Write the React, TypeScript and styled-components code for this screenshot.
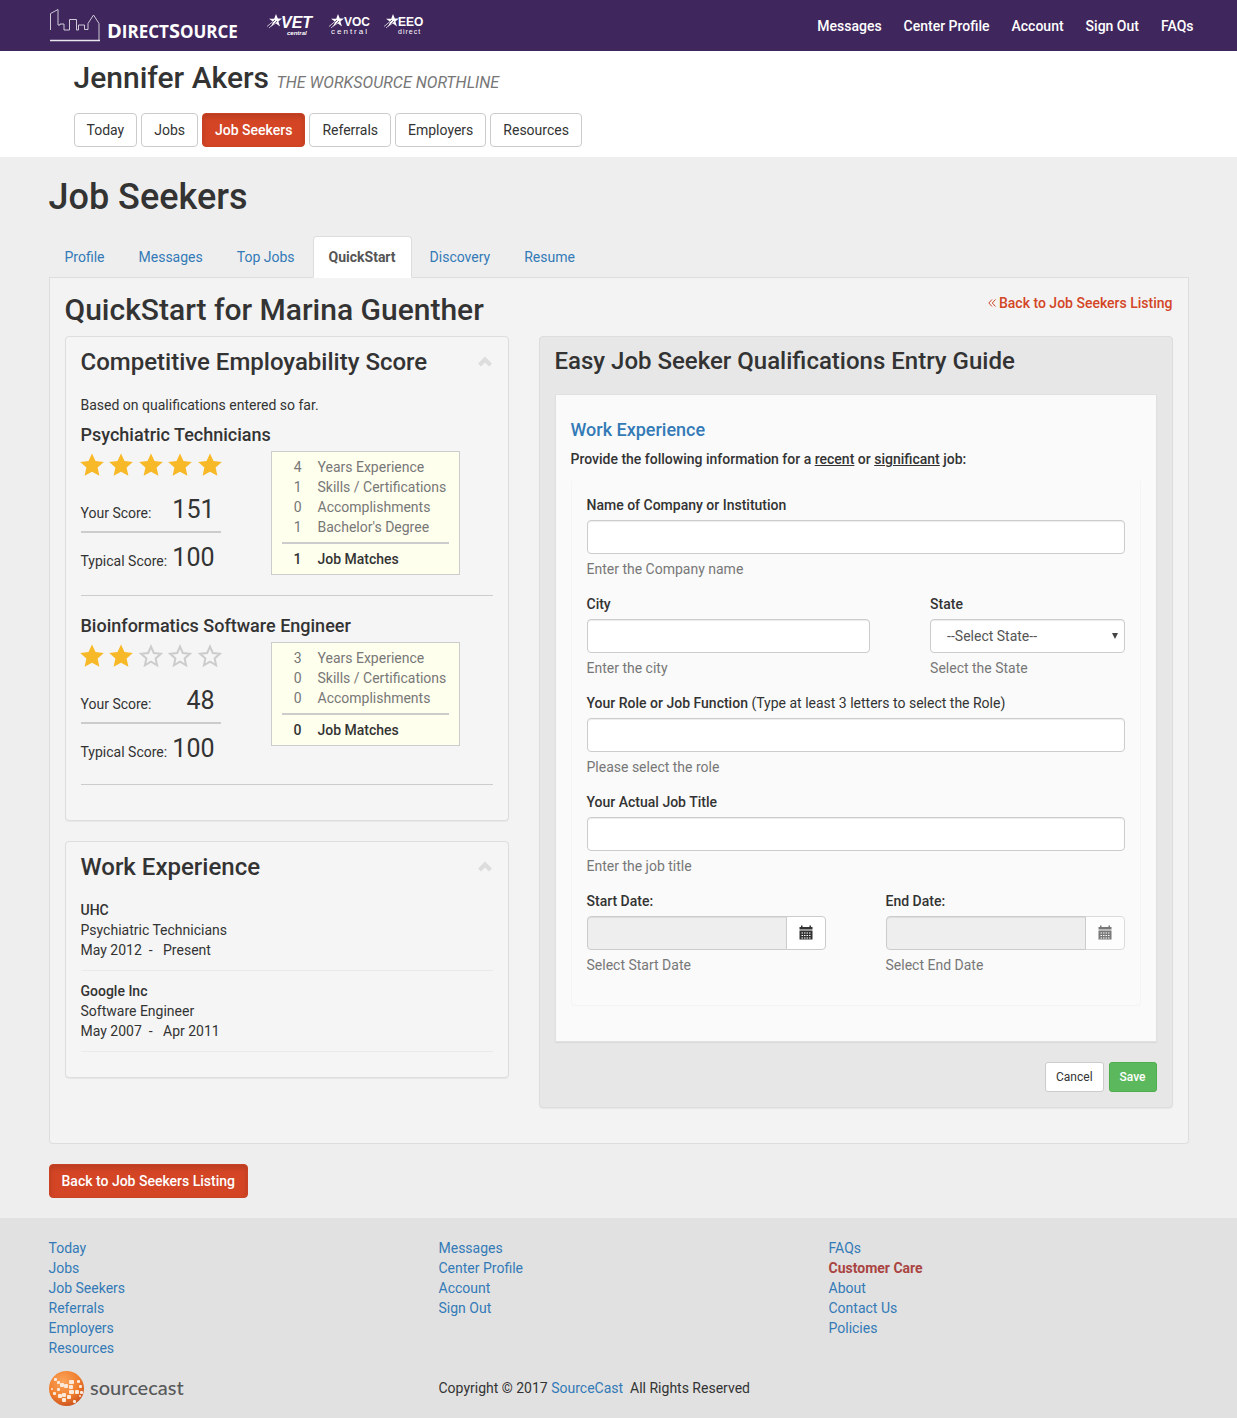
import React, { useId } from "react";
import styled, { createGlobalStyle, css } from "styled-components";

const GlobalStyle = createGlobalStyle`
  *, *::before, *::after { box-sizing: border-box; }
  body {
    margin: 0;
    background: #eee;
    color: #333;
    font: 400 14px/20px Roboto, "Liberation Sans", sans-serif;
  }
  button, input, select { font: inherit; color: inherit; margin: 0; }
  h1, h2, h3, h4, p, ul { margin: 0; padding: 0; }
  h1, h2, h3, h4 { font-weight: 500; }
  ul { list-style: none; }
  a { color: #337ab7; text-decoration: none; }
  svg { display: block; }
`;

/* ---------- shared ---------- */

const Container = styled.div`
  width: 100%;
  max-width: 1170px;
  margin: 0 auto;
  padding: 0 15px;
`;

const primary = css`
  background: #d34525;
  border-color: #c84223;
  color: #fff;
  font-weight: 500;
  box-shadow: inset 0 3px 5px rgba(0, 0, 0, 0.125);
`;

const ButtonLink = styled.a<{ $active?: boolean }>`
  display: inline-block;
  padding: 6px 12px;
  border: 1px solid #ccc;
  border-radius: 4px;
  background: #fff;
  color: #333;
  white-space: nowrap;
  ${(p) => p.$active && primary}
`;

/* ---------- top bar ---------- */

const TopBar = styled.header`
  background: #3f265d;
`;

const TopInner = styled(Container)`
  display: flex;
  align-items: center;
  justify-content: space-between;
  height: 51px;
`;

const Brands = styled.div`
  display: flex;
  align-items: center;
  gap: 28px;
`;

const TopNav = styled.nav`
  display: flex;
  gap: 22px;
  margin-right: -5px;

  a {
    color: #fff;
    font-weight: 500;
  }
`;

/* ---------- user header ---------- */

const UserHeader = styled.section`
  background: #fff;
`;

const UserInner = styled(Container)`
  padding: 10px 40px;
`;

const UserName = styled.h2`
  font-size: 30px;
  line-height: 33px;
  margin-bottom: 19px;
`;

const Center = styled.small`
  color: #777;
  font-size: 16px;
  font-style: italic;
  font-weight: 400;
  line-height: 1;
  text-transform: uppercase;
`;

const MainNav = styled.nav`
  display: flex;
  flex-wrap: wrap;
  gap: 4px;
`;

/* ---------- page ---------- */

const PageTitle = styled.h1`
  padding: 20px 0 19px;
  font-size: 36px;
  line-height: 40px;
`;

const Tabs = styled.ul`
  display: flex;
  gap: 2px;
  border-bottom: 1px solid #ddd;
`;

const Tab = styled.li<{ $active?: boolean }>`
  margin-bottom: -1px;

  a {
    display: block;
    padding: 10px 15px;
    border: 1px solid transparent;
    border-radius: 4px 4px 0 0;
    ${(p) =>
      p.$active &&
      css`
        background: #fff;
        border-color: #ddd #ddd #fff;
        color: #555;
        font-weight: 700;
      `}
  }
`;

const TabPanel = styled.div`
  padding: 15px 15px 35px;
  border: 1px solid #ddd;
  border-top: 0;
  border-radius: 0 0 4px 4px;
  background: #f3f3f3;
`;

const PanelHead = styled.div`
  display: flex;
  justify-content: space-between;
  align-items: flex-start;
  margin-bottom: 10px;

  h2 {
    font-size: 30px;
    line-height: 33px;
  }
`;

const BackLink = styled.a`
  display: flex;
  align-items: center;
  gap: 3px;
  color: #d34525;
  font-weight: 500;
`;

const Columns = styled.div`
  display: grid;
  grid-template-columns: minmax(0, 444fr) minmax(0, 634fr);
  gap: 30px;
  align-items: start;
`;

const LeftColumn = styled.div`
  display: grid;
  gap: 20px;
`;

const Card = styled.section`
  padding: 12px 15px 15px;
  border: 1px solid #ddd;
  border-radius: 4px;
  background: #f5f5f5;
  box-shadow: 0 1px 1px rgba(0, 0, 0, 0.05);
`;

const CardHead = styled.div`
  display: flex;
  justify-content: space-between;
  align-items: center;
  margin-bottom: 20px;
`;

const CardTitle = styled.h3`
  font-size: 24px;
  line-height: 26px;
`;

const CollapseButton = styled.button`
  padding: 0;
  border: 0;
  background: none;
  color: #ddd;
  cursor: pointer;
`;

/* ---------- score ---------- */

const ScoreBlock = styled.article`
  padding-bottom: 20px;
  margin-bottom: 20px;
  border-bottom: 1px solid #ccc;
`;

const Occupation = styled.h4`
  margin: 10px 0 6px;
  font-size: 18px;
  line-height: 20px;
`;

const ScoreBody = styled.div`
  display: flex;
  align-items: flex-start;
  gap: 50px;
`;

const ScoreSide = styled.div`
  width: 140px;
`;

const Stars = styled.div`
  display: flex;
  justify-content: space-between;
  margin: 0 -1px;
  padding: 2px 0 18px;

  svg {
    flex: none;
  }
`;

const ScoreLine = styled.div`
  display: flex;
  align-items: baseline;
  justify-content: space-between;
  padding-right: 6px;
  white-space: nowrap;

  & + & {
    margin-top: 6px;
    padding-top: 10px;
    border: solid #ccc;
    border-width: 2px 0 0;
  }
`;

const ScoreValue = styled.strong`
  font-weight: 400;
  font-size: 25px;
  line-height: 30px;
`;

const Facts = styled.ul`
  width: 189px;
  padding: 5px 10px;
  border: 1px solid #ccc;
  background: #ffffee;
  color: #777;
`;

const Fact = styled.li<{ $total?: boolean }>`
  display: grid;
  grid-template-columns: 20px auto;
  justify-content: start;
  gap: 16px;
  white-space: nowrap;

  span:first-child {
    text-align: right;
  }

  ${(p) =>
    p.$total &&
    css`
      justify-content: stretch;
      margin-top: 5px;
      padding-top: 5px;
      border-top: 2px solid #ccc;
      color: #333;
      font-weight: 500;
    `}
`;

const Job = styled.div`
  padding-bottom: 10px;
  margin-bottom: 10px;
  border-bottom: 1px solid #eaeaea;
  white-space: pre;

  strong {
    font-weight: 500;
  }
`;

/* ---------- form ---------- */

const GuideCard = styled(Card)`
  padding-top: 11px;
  background: #e7e7e7;
`;

const Sheet = styled.div`
  padding: 25px 15px 35px;
  border: 1px solid #e1e1e1;
  background: #fafafa;
  background-clip: padding-box;
  box-shadow: 0 1px 1px rgba(0, 0, 0, 0.05);

  h4 {
    color: #337ab7;
    font-size: 18px;
  }

  p {
    margin: 9px 0 10px;
    font-weight: 500;
  }
`;

const Fields = styled.div`
  display: grid;
  gap: 15px;
  padding: 15px 15px 30px;
  border: 1px solid #f4f4f4;
  border-top-color: transparent;
  border-radius: 4px;
`;

const FieldRow = styled.div<{ $columns: string }>`
  display: grid;
  grid-template-columns: ${(p) => p.$columns};
  gap: 60px;
`;

const FieldBox = styled.div`
  display: grid;
  gap: 5px;

  label {
    font-weight: 500;
  }

  label span {
    font-weight: 400;
  }

  small {
    color: #777;
    font-size: 14px;
  }
`;

const control = css`
  width: 100%;
  min-width: 0;
  height: 34px;
  padding: 6px 12px;
  border: 1px solid #ccc;
  border-radius: 4px;
  background: #fff;
  color: #555;
  box-shadow: inset 0 1px 1px rgba(0, 0, 0, 0.075);
`;

const Input = styled.input`
  ${control}

  &:read-only {
    background: #eee;
    border-radius: 4px 0 0 4px;
  }
`;

const SelectWrap = styled.div`
  position: relative;

  svg {
    position: absolute;
    right: 7px;
    top: 14px;
    pointer-events: none;
  }
`;

const Select = styled.select`
  ${control}
  padding: 6px 16px;
  appearance: none;
`;

const DateGroup = styled.div`
  display: flex;
`;

const DateButton = styled.button`
  flex: none;
  display: grid;
  place-items: center;
  width: 40px;
  margin-left: -1px;
  padding: 0;
  border: 1px solid #ccc;
  border-radius: 0 4px 4px 0;
  background: #fff;
  color: #333;

  &:disabled {
    opacity: 0.65;
  }
`;

const Actions = styled.div`
  display: flex;
  justify-content: flex-end;
  gap: 5px;
  margin-top: 20px;
`;

const SmallButton = styled.button<{ $save?: boolean }>`
  height: 30px;
  padding: 5px 10px;
  border: 1px solid ${(p) => (p.$save ? "#4cae4c" : "#ccc")};
  border-radius: 3px;
  background: ${(p) => (p.$save ? "#5cb85c" : "#fff")};
  color: ${(p) => (p.$save ? "#fff" : "#333")};
  font-size: 12px;
  line-height: 18px;
  font-weight: ${(p) => (p.$save ? 500 : 400)};
`;

const BackRow = styled.div`
  padding: 20px 0;
`;

/* ---------- footer ---------- */

const Footer = styled.footer`
  padding: 20px 0 12px;
  background: #e1e1e1;
`;

const FooterGrid = styled(Container)`
  display: grid;
  grid-template-columns: repeat(3, minmax(0, 1fr));
  column-gap: 30px;
  row-gap: 12px;
`;

const FooterLink = styled.a<{ $strong?: boolean }>`
  ${(p) =>
    p.$strong &&
    css`
      color: #a94442;
      font-weight: 700;
    `}
`;

const Copyright = styled.div`
  grid-column: span 2;
  padding-top: 8px;
  white-space: pre-wrap;
`;

/* ---------- drawings ---------- */

const STAR =
  "M12 0.6 L15.5 8.1 L23.8 9 L17.6 14.6 L19.4 22.8 L12 18.7 L4.6 22.8 L6.4 14.6 L0.2 9 L8.5 8.1 Z";

const Star = ({ on }: { on: boolean }) => (
  <svg width="24" height="24" viewBox="0 0 24 24" aria-hidden="true">
    {on ? (
      <path d={STAR} fill="#f8b928" />
    ) : (
      <path
        d="M12 2.6 L14.8 9 L21.9 9.7 L16.6 14.4 L18.1 21.3 L12 17.7 L5.9 21.3 L7.4 14.4 L2.1 9.7 L9.2 9 Z"
        fill="none"
        stroke="#ccc"
        strokeWidth="2"
      />
    )}
  </svg>
);

const ChevronUp = () => (
  <svg width="16" height="12" viewBox="0 0 16 12" aria-hidden="true">
    <path d="M8 0.600 L15 7.600 L12 10.600 L8 6.600 L4 10.600 L1 7.600 Z" fill="currentColor" />
  </svg>
);

const CalendarIcon = () => (
  <svg width="14" height="16" viewBox="0 0 14 16" fill="currentColor" aria-hidden="true">
    <path d="M0.500 2H2V0.500h1.500V2h7V0.500H12V2h1.500v2.500h-13z" />
    <path d="M0.500 5.500h13v9h-13z" />
    <path
      d="M2.500 8h9M2.500 10.500h9M2.500 13h9"
      stroke="#fff"
      strokeWidth="1.200"
      strokeDasharray="1.500 1"
    />
  </svg>
);

const DirectSourceLogo = () => (
  <svg width="190" height="40" viewBox="0 0 190 40" role="img" aria-label="DirectSource">
    <path
      d="M1.500 24V7.500L9 3.500V19H11V18H15V24H20.500V13.500H27.500V24H29.500V19H35.500V23.500H39V17.500L44.500 9L50 17.500V34"
      fill="none"
      stroke="#cfc9d8"
      strokeWidth="1"
    />
    <path d="M1 34.500H51" stroke="#e8e5ec" strokeWidth="1.500" />
    <text x="58" y="32" fill="#fff" fontFamily='"Open Sans", sans-serif' fontWeight="700" fontSize="20">
      D<tspan fontSize="17">IRECT</tspan>S<tspan fontSize="17">OURCE</tspan>
    </text>
  </svg>
);

const ShootingStar = () => (
  <g>
    <path d="M9 0l1.800 4.500H15l-3.600 3 1.600 5-4-3-5 3.200 2.200-5L2 4.700h5.200z" fill="#fff" />
    <path d="M0 13.500L8 6M3 15L10 7" stroke="#3f265d" strokeWidth="0.800" />
    <path d="M0 12.500L6 7.500M2 14L7 9.500" stroke="#fff" strokeWidth="0.700" />
  </g>
);

const PartnerLogos = () => (
  <svg width="160" height="24" viewBox="0 0 160 24" fill="#fff" fontFamily='"Liberation Sans", sans-serif'>
    <g>
      <ShootingStar />
      <text x="14" y="14" fontSize="16" fontWeight="700" fontStyle="italic">VET</text>
      <text x="20" y="21" fontSize="6" fontStyle="italic" fontWeight="700">central</text>
    </g>
    <g transform="translate(62 0)">
      <ShootingStar />
      <text x="15" y="12" fontSize="12" fontWeight="700">VOC</text>
      <text x="2" y="20" fontSize="8" letterSpacing="2">central</text>
    </g>
    <g transform="translate(117 0)">
      <ShootingStar />
      <text x="14" y="12" fontSize="12" fontWeight="700">EEO</text>
      <text x="14" y="20" fontSize="7" letterSpacing="1">direct</text>
    </g>
  </svg>
);

const GLOBE_TILES = [
  [5, 8, 3], [8, 11, 3], [11, 13, 4], [15, 14, 4], [20, 10, 5], [20, 15, 4], [28, 10, 3], [30, 15, 3],
  [2, 18, 2], [4, 22, 3], [8, 18, 3], [9, 24, 4], [13, 23, 4], [13, 28, 4], [20, 20, 5], [18, 25, 4],
  [26, 20, 4], [31, 21, 3], [30, 25, 2], [24, 30, 3],
];

const SourceCastLogo = () => (
  <svg width="140" height="36" viewBox="0 0 140 36" role="img" aria-label="sourcecast">
    <defs>
      <radialGradient id="globe" cx="0.4" cy="0.3" r="0.75">
        <stop offset="0" stopColor="#fba45a" />
        <stop offset="0.6" stopColor="#f07f2e" />
        <stop offset="1" stopColor="#c9501f" />
      </radialGradient>
    </defs>
    <circle cx="17.500" cy="18.500" r="17.500" fill="url(#globe)" />
    {GLOBE_TILES.map(([x, y, s]) => (
      <rect key={`${x}-${y}`} x={x} y={y} width={s} height={Math.min(s, 4)} rx="1" fill="#fde9da" />
    ))}
    <text x="41" y="25" fill="#58595b" fontFamily="Lato, sans-serif" fontWeight="500" fontSize="20">
      sourcecast
    </text>
  </svg>
);

/* ---------- parts ---------- */

type FieldProps = {
  label: string;
  note?: string;
  help: string;
  children: (id: string) => React.ReactNode;
};

const Field = ({ label, note, help, children }: FieldProps) => {
  const id = useId();
  return (
    <FieldBox>
      <label htmlFor={id}>
        {label}
        {note && <span> {note}</span>}
      </label>
      {children(id)}
      <small>{help}</small>
    </FieldBox>
  );
};

type Score = {
  title: string;
  stars: number;
  score: number;
  facts: [number, string][];
  matches: number;
};

const SCORES: Score[] = [
  {
    title: "Psychiatric Technicians",
    stars: 5,
    score: 151,
    facts: [
      [4, "Years Experience"],
      [1, "Skills / Certifications"],
      [0, "Accomplishments"],
      [1, "Bachelor's Degree"],
    ],
    matches: 1,
  },
  {
    title: "Bioinformatics Software Engineer",
    stars: 2,
    score: 48,
    facts: [
      [3, "Years Experience"],
      [0, "Skills / Certifications"],
      [0, "Accomplishments"],
    ],
    matches: 0,
  },
];

const ScoreItem = ({ item }: { item: Score }) => (
  <ScoreBlock>
    <Occupation>{item.title}</Occupation>
    <ScoreBody>
      <ScoreSide>
        <Stars role="img" aria-label={`${item.stars} of 5 stars`}>
          {[0, 1, 2, 3, 4].map((n) => (
            <Star key={n} on={n < item.stars} />
          ))}
        </Stars>
        <ScoreLine>
          Your Score: <ScoreValue>{item.score}</ScoreValue>
        </ScoreLine>
        <ScoreLine>
          Typical Score: <ScoreValue>100</ScoreValue>
        </ScoreLine>
      </ScoreSide>
      <Facts>
        {item.facts.map(([count, name]) => (
          <Fact key={name}>
            <span>{count}</span>
            <span>{name}</span>
          </Fact>
        ))}
        <Fact $total>
          <span>{item.matches}</span>
          <span>Job Matches</span>
        </Fact>
      </Facts>
    </ScoreBody>
  </ScoreBlock>
);

const CollapsibleHead = ({ title }: { title: string }) => (
  <CardHead>
    <CardTitle>{title}</CardTitle>
    <CollapseButton type="button" aria-label={`Collapse ${title}`}>
      <ChevronUp />
    </CollapseButton>
  </CardHead>
);

const MAIN_NAV = ["Today", "Jobs", "Job Seekers", "Referrals", "Employers", "Resources"];
const TOP_NAV = ["Messages", "Center Profile", "Account", "Sign Out", "FAQs"];
const TABS = ["Profile", "Messages", "Top Jobs", "QuickStart", "Discovery", "Resume"];
const FOOTER = [
  MAIN_NAV,
  ["Messages", "Center Profile", "Account", "Sign Out"],
  ["FAQs", "Customer Care", "About", "Contact Us", "Policies"],
];
const JOBS = [
  ["UHC", "Psychiatric Technicians", "May 2012  -   Present"],
  ["Google Inc", "Software Engineer", "May 2007  -   Apr 2011"],
];

export default function App() {
  return (
    <>
      <GlobalStyle />
      <TopBar>
        <TopInner>
          <Brands>
            <DirectSourceLogo />
            <PartnerLogos />
          </Brands>
          <TopNav>
            {TOP_NAV.map((t) => (
              <a key={t} href="#">{t}</a>
            ))}
          </TopNav>
        </TopInner>
      </TopBar>

      <UserHeader>
        <UserInner>
          <UserName>
            Jennifer Akers <Center>The WorkSource Northline</Center>
          </UserName>
          <MainNav>
            {MAIN_NAV.map((t) => (
              <ButtonLink key={t} href="#" $active={t === "Job Seekers"}>{t}</ButtonLink>
            ))}
          </MainNav>
        </UserInner>
      </UserHeader>

      <Container as="main">
        <PageTitle>Job Seekers</PageTitle>
        <Tabs>
          {TABS.map((t) => (
            <Tab key={t} $active={t === "QuickStart"}>
              <a href="#">{t}</a>
            </Tab>
          ))}
        </Tabs>
        <TabPanel>
          <PanelHead>
            <h2>QuickStart for Marina Guenther</h2>
            <BackLink href="#">
              <svg width="8" height="8" viewBox="0 0 8 8" fill="none" stroke="currentColor" aria-hidden="true">
                <path d="M4 0.500L0.800 4L4 7.500M7.500 0.500L4.300 4L7.500 7.500" />
              </svg>
              Back to Job Seekers Listing
            </BackLink>
          </PanelHead>
          <Columns>
            <LeftColumn>
              <Card>
                <CollapsibleHead title="Competitive Employability Score" />
                <p>Based on qualifications entered so far.</p>
                {SCORES.map((s) => (
                  <ScoreItem key={s.title} item={s} />
                ))}
              </Card>
              <Card>
                <CollapsibleHead title="Work Experience" />
                {JOBS.map(([company, role, dates]) => (
                  <Job key={company}>
                    <strong>{company}</strong>
                    <div>{role}</div>
                    <div>{dates}</div>
                  </Job>
                ))}
              </Card>
            </LeftColumn>

            <GuideCard as="form">
              <CardHead>
                <CardTitle>Easy Job Seeker Qualifications Entry Guide</CardTitle>
              </CardHead>
              <Sheet>
                <h4>Work Experience</h4>
                <p>
                  Provide the following information for a <u>recent</u> or <u>significant</u> job:
                </p>
                <Fields>
                  <Field label="Name of Company or Institution" help="Enter the Company name">
                    {(id) => <Input id={id} />}
                  </Field>
                  <FieldRow $columns="283fr 194fr">
                    <Field label="City" help="Enter the city">
                      {(id) => <Input id={id} />}
                    </Field>
                    <Field label="State" help="Select the State">
                      {(id) => (
                        <SelectWrap>
                          <Select id={id}>
                            <option>--Select State--</option>
                          </Select>
                          <svg width="6" height="6" viewBox="0 0 6 6" fill="#444" aria-hidden="true">
                            <path d="M0 0h6L3 6z" />
                          </svg>
                        </SelectWrap>
                      )}
                    </Field>
                  </FieldRow>
                  <Field
                    label="Your Role or Job Function"
                    note="(Type at least 3 letters to select the Role)"
                    help="Please select the role"
                  >
                    {(id) => <Input id={id} />}
                  </Field>
                  <Field label="Your Actual Job Title" help="Enter the job title">
                    {(id) => <Input id={id} />}
                  </Field>
                  <FieldRow $columns="1fr 1fr">
                    <Field label="Start Date:" help="Select Start Date">
                      {(id) => (
                        <DateGroup>
                          <Input id={id} readOnly />
                          <DateButton type="button" aria-label="Pick start date">
                            <CalendarIcon />
                          </DateButton>
                        </DateGroup>
                      )}
                    </Field>
                    <Field label="End Date:" help="Select End Date">
                      {(id) => (
                        <DateGroup>
                          <Input id={id} readOnly />
                          <DateButton type="button" aria-label="Pick end date" disabled>
                            <CalendarIcon />
                          </DateButton>
                        </DateGroup>
                      )}
                    </Field>
                  </FieldRow>
                </Fields>
              </Sheet>
              <Actions>
                <SmallButton type="button">Cancel</SmallButton>
                <SmallButton type="submit" $save>Save</SmallButton>
              </Actions>
            </GuideCard>
          </Columns>
        </TabPanel>
        <BackRow>
          <ButtonLink href="#" $active>Back to Job Seekers Listing</ButtonLink>
        </BackRow>
      </Container>

      <Footer>
        <FooterGrid>
          {FOOTER.map((links) => (
            <ul key={links[0]}>
              {links.map((t) => (
                <li key={t}>
                  <FooterLink href="#" $strong={t === "Customer Care"}>{t}</FooterLink>
                </li>
              ))}
            </ul>
          ))}
          <SourceCastLogo />
          <Copyright>
            Copyright © 2017 <a href="#">SourceCast</a>{"  "}All Rights Reserved
          </Copyright>
        </FooterGrid>
      </Footer>
    </>
  );
}
